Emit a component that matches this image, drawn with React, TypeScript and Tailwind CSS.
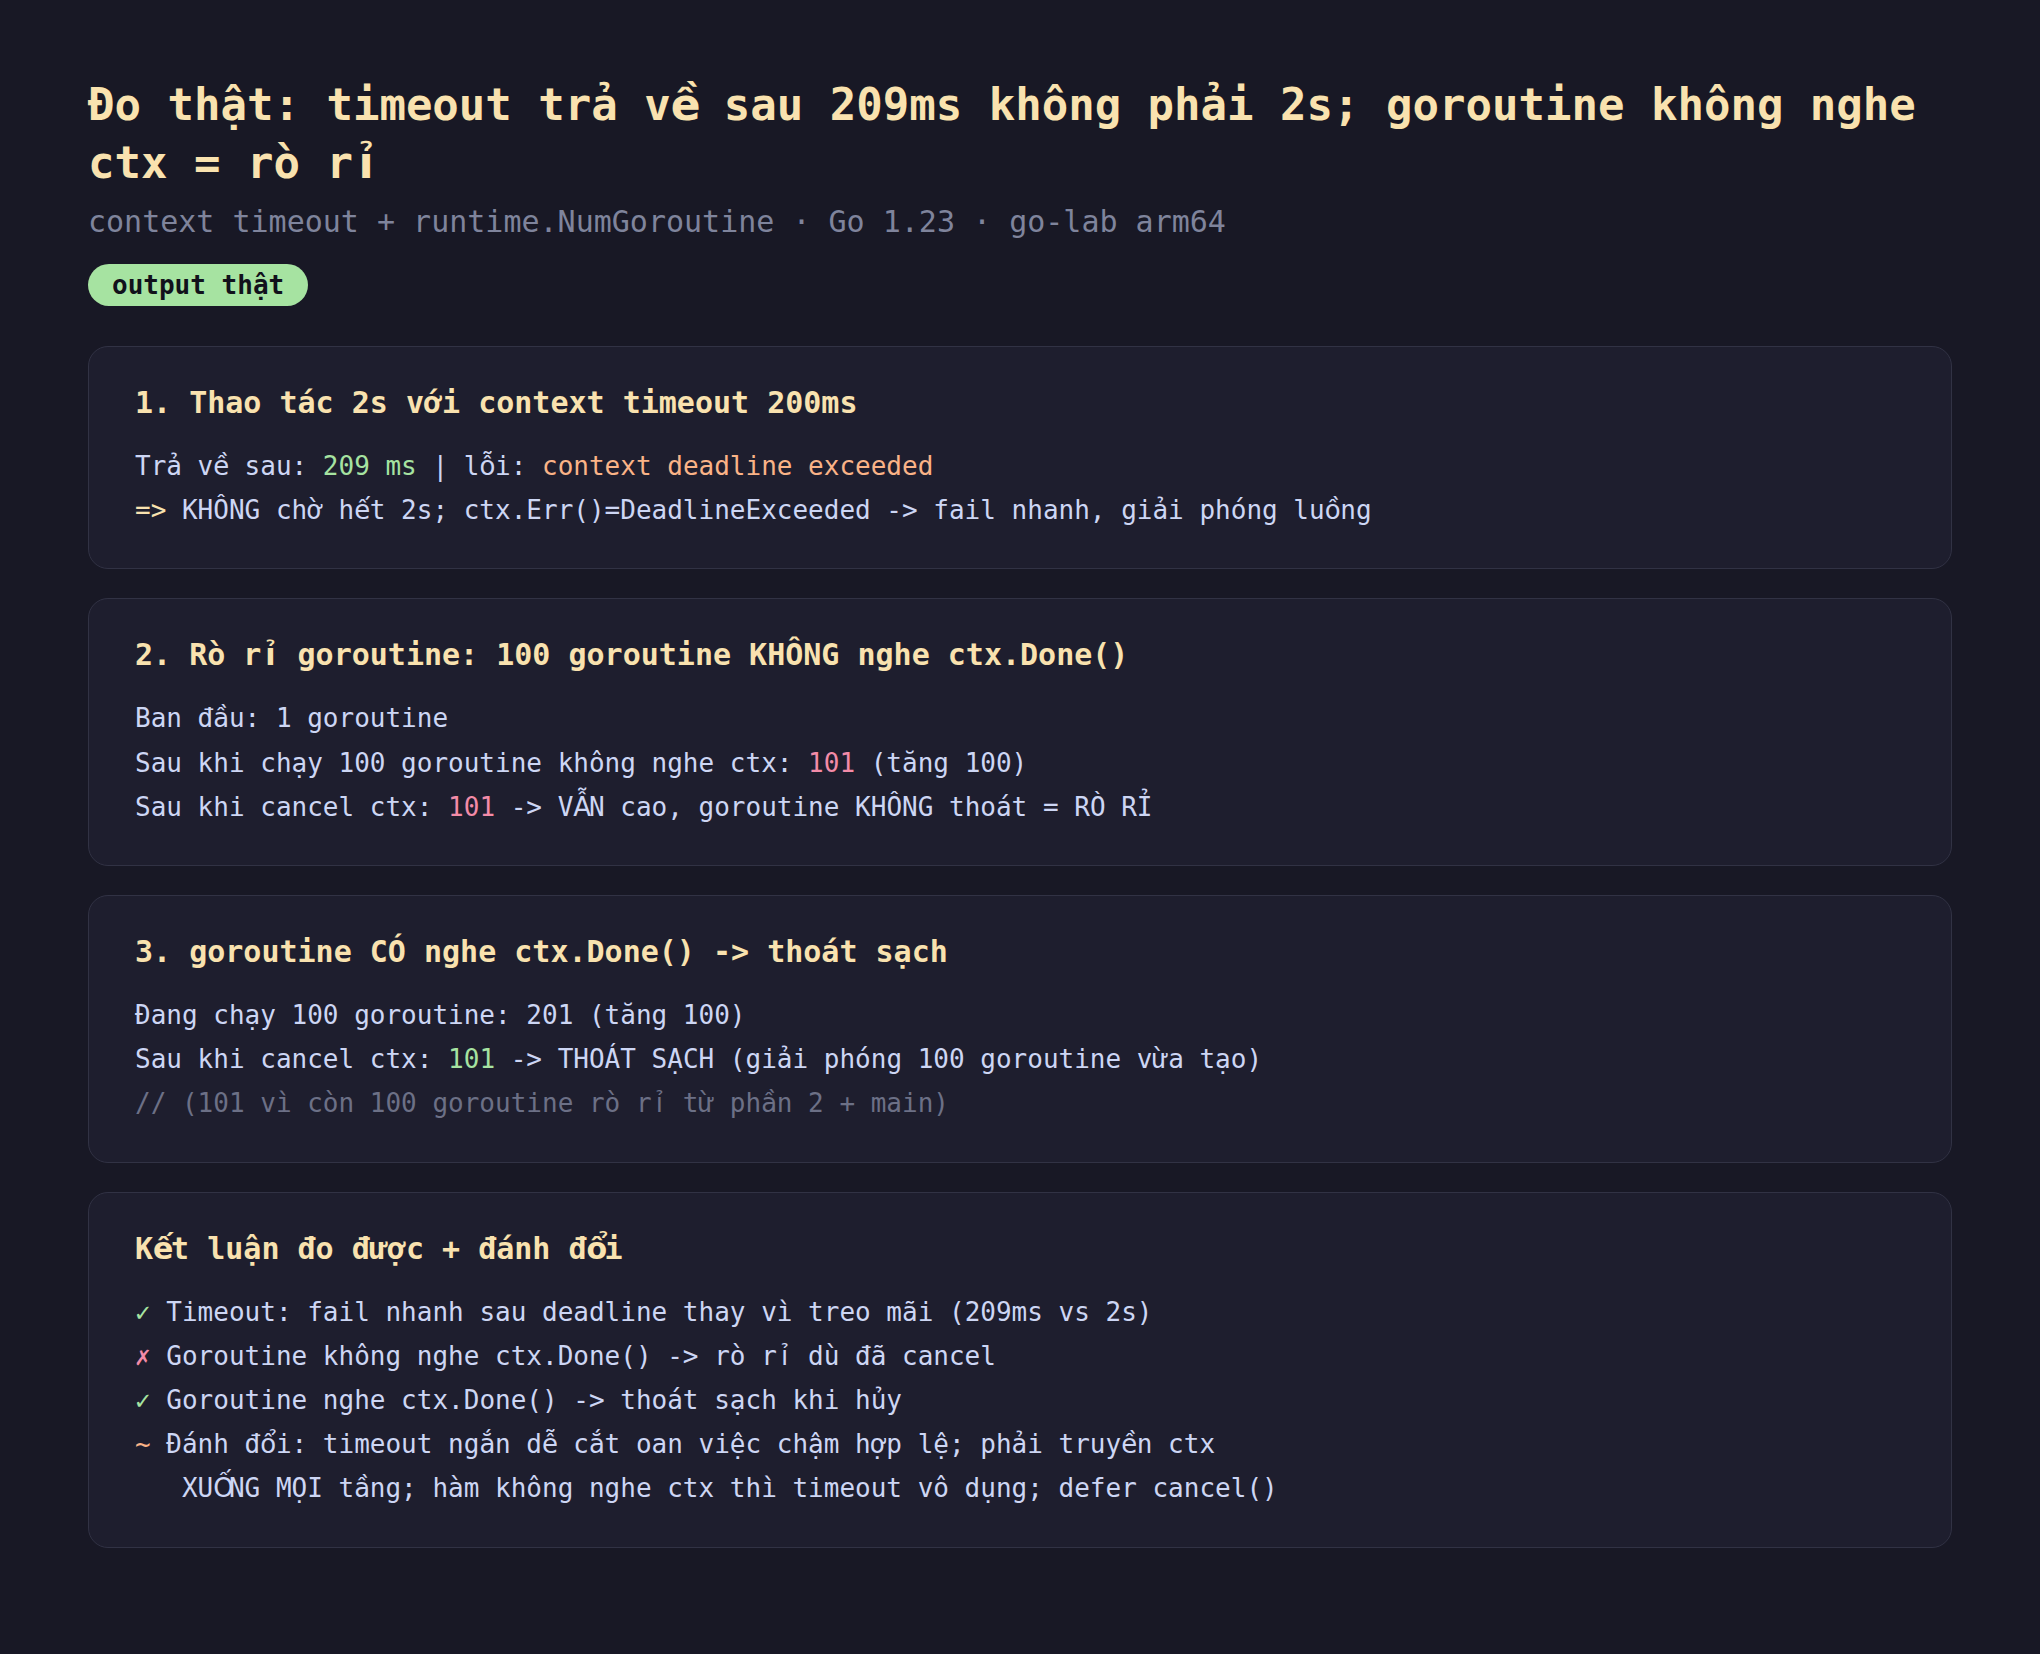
import React from "react";

const FIX = /[ềếồốổỗộầấẫẩễểắằẳẵỉỀẾỒỐỔỖẦẤẪẨỄỂẮẰẲẴ]/;

function V({ s }: { s: string }) {
  const chars = Array.from(s.normalize("NFC"));
  const out: React.ReactNode[] = [];
  let run = "";
  chars.forEach((ch, i) => {
    if (FIX.test(ch)) {
      if (run) out.push(run);
      run = "";
      out.push(
        <span key={i} className="inline-block w-[0.602em] text-center font-['DejaVu_Sans',sans-serif]">
          {ch}
        </span>
      );
    } else {
      run += ch;
    }
  });
  if (run) out.push(run);
  return <>{out}</>;
}

function Card({ title, children }: { title: string; children: React.ReactNode }) {
  return (
    <div className="rounded-[20px] border border-[#313244] bg-[#1e1e2e] px-[46px] py-[36px]">
      <div className="mb-[22px] text-[30px] font-bold leading-[39px] text-[#f9e2af]">
        <V s={title} />
      </div>
      <div className="whitespace-pre text-[26px] leading-[44.2px] text-[#cdd6f4]">{children}</div>
    </div>
  );
}

export default function App() {
  return (
    <div className="min-h-screen bg-[#181825] px-[88px] pt-[76px] pb-[100px] font-['DejaVu_Sans_Mono','Liberation_Mono',monospace]">
      <h1 className="text-[44px] font-bold leading-[58px] text-[#f9e2af]">
        <V s="Đo thật: timeout trả về sau 209ms không phải 2s; goroutine không nghe ctx = rò rỉ" />
      </h1>
      <div className="mt-[7px] text-[30px] leading-[45px] text-[#7f849c]">
        context timeout + runtime.NumGoroutine · Go 1.23 · go-lab arm64
      </div>
      <div className="mt-[20px] inline-block rounded-full bg-[#a6e3a1] px-[24px] py-[6px] text-[26px] font-bold leading-[30px] text-[#11111b]">
        output thật
      </div>
      <div className="mt-[40px] flex flex-col gap-[29px]">
        <Card title="1. Thao tác 2s với context timeout 200ms">
          <div>
            <V s="Trả về sau: " />
            <span className="text-[#a6e3a1]">209 ms</span>
            <V s=" | lỗi: " />
            <span className="text-[#fab387]">context deadline exceeded</span>
          </div>
          <div>
            <span className="text-[#f9e2af]">=&gt;</span>
            <V s=" KHÔNG chờ hết 2s; ctx.Err()=DeadlineExceeded -> fail nhanh, giải phóng luồng" />
          </div>
        </Card>
        <Card title="2. Rò rỉ goroutine: 100 goroutine KHÔNG nghe ctx.Done()">
          <div>
            <V s="Ban đầu: 1 goroutine" />
          </div>
          <div>
            <V s="Sau khi chạy 100 goroutine không nghe ctx: " />
            <span className="text-[#f38ba8]">101</span>
            <V s=" (tăng 100)" />
          </div>
          <div>
            <V s="Sau khi cancel ctx: " />
            <span className="text-[#f38ba8]">101</span>
            <V s=" -> VẪN cao, goroutine KHÔNG thoát = RÒ RỈ" />
          </div>
        </Card>
        <Card title="3. goroutine CÓ nghe ctx.Done() -> thoát sạch">
          <div>
            <V s="Đang chạy 100 goroutine: 201 (tăng 100)" />
          </div>
          <div>
            <V s="Sau khi cancel ctx: " />
            <span className="text-[#a6e3a1]">101</span>
            <V s=" -> THOÁT SẠCH (giải phóng 100 goroutine vừa tạo)" />
          </div>
          <div className="text-[#6c7086]">
            <V s="// (101 vì còn 100 goroutine rò rỉ từ phần 2 + main)" />
          </div>
        </Card>
        <Card title="Kết luận đo được + đánh đổi">
          <div>
            <span className="text-[#a6e3a1]">✓</span>
            <V s=" Timeout: fail nhanh sau deadline thay vì treo mãi (209ms vs 2s)" />
          </div>
          <div>
            <span className="text-[#f38ba8]">✗</span>
            <V s=" Goroutine không nghe ctx.Done() -> rò rỉ dù đã cancel" />
          </div>
          <div>
            <span className="text-[#a6e3a1]">✓</span>
            <V s=" Goroutine nghe ctx.Done() -> thoát sạch khi hủy" />
          </div>
          <div>
            <span className="text-[#fab387]">~</span>
            <V s=" Đánh đổi: timeout ngắn dễ cắt oan việc chậm hợp lệ; phải truyền ctx" />
          </div>
          <div>
            <V s="   XUỐNG MỌI tầng; hàm không nghe ctx thì timeout vô dụng; defer cancel()" />
          </div>
        </Card>
      </div>
    </div>
  );
}
